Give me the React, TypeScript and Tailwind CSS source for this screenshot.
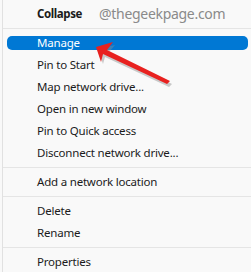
const items = [
  "Manage",
  "Pin to Start",
  "Map network drive...",
  "Open in new window",
  "Pin to Quick access",
  "Disconnect network drive...",
];

function Item({ label, active = false }: { label: string; active?: boolean }) {
  return (
    <div className="h-[22px] flex items-center pl-[4px] pr-[3px]">
      <div
        className={
          "flex-1 h-[14px] flex items-center rounded-[5px] pl-[30px] " +
          (active ? "bg-[#0078d4] text-white" : "text-[#1b1b1b]")
        }
      >
        {label}
      </div>
    </div>
  );
}

function Separator() {
  return <div className="h-px my-[3px] bg-[#e5e5e5]" />;
}

export default function App() {
  return (
    <div
      className="relative w-[251px] h-[272px] bg-[#f9f9f9] overflow-hidden text-[11.5px] tracking-[-0.2px] leading-none"
      style={{ fontFamily: '"Segoe UI", "Noto Sans", sans-serif' }}
    >
      <div className="ml-[2px] h-full border-l border-[#e1e1e1] pt-[3px]">
        <div className="h-[22px] flex items-center pl-[34px]">
          <span className="font-bold text-[#1b1b1b] tracking-[-0.4px]">Collapse</span>
          <span className="ml-[17px] text-[14px] tracking-[-0.3px] text-[#8a8a8a]">@thegeekpage.com</span>
        </div>
        <Separator />
        {items.map((label, i) => (
          <Item key={label} label={label} active={i === 0} />
        ))}
        <Separator />
        <Item label="Add a network location" />
        <Separator />
        <Item label="Delete" />
        <Item label="Rename" />
        <Separator />
        <Item label="Properties" />
      </div>

      {/* red arrow pointing at Manage */}
      <svg className="absolute left-0 top-0" width="251" height="272" viewBox="0 0 251 272">
        <path d="M98 49 L115 45 L109 52 L172 84 L169 87 L105 57 L103 64 Z" fill="#8c8c8c" opacity="0.45" />
        <path d="M96 47 L113 42 L107 50 L170 81 L167 84 L103 54 L101 62 Z" fill="#e8211f" />
      </svg>
    </div>
  );
}
